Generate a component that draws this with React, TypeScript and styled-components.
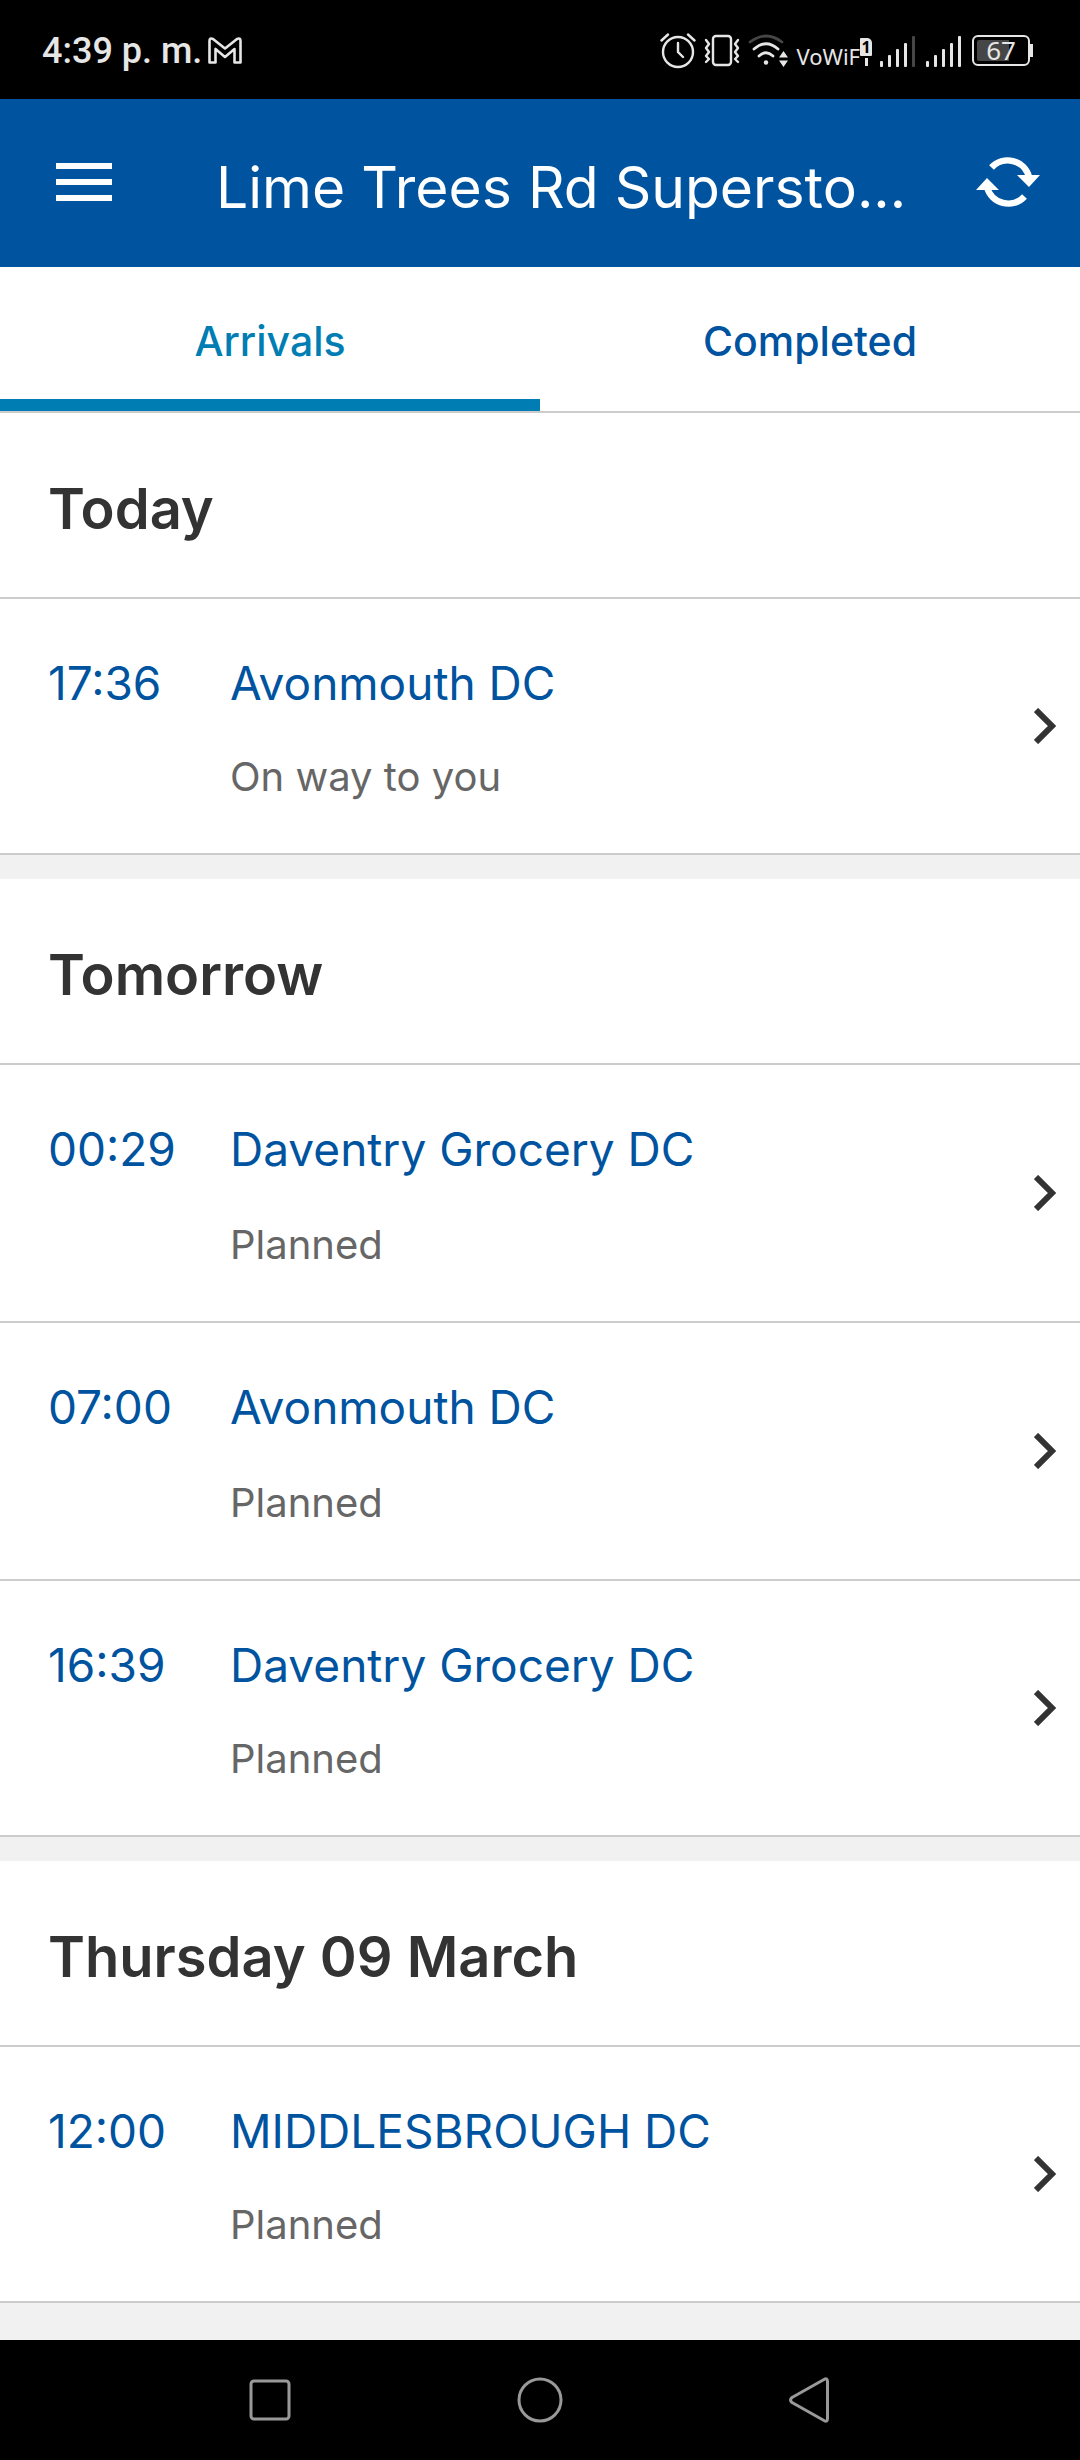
import React, { useState } from "react";
import styled, { createGlobalStyle } from "styled-components";

const GlobalStyle = createGlobalStyle`
  *, *::before, *::after { box-sizing: border-box; }
  html, body, #root { height: 100%; }
  body {
    margin: 0;
    background: #f1f1f1;
    font-family: Inter, "Liberation Sans", sans-serif;
  }
  button { font: inherit; color: inherit; border: 0; padding: 0; background: none; cursor: pointer; }
  svg { display: block; flex: none; }
  h1, h2, p { margin: 0; }
`;

const BRAND = "#00539f";
const ACCENT = "#007eb3";
const LINE = "#cccccc";

const Screen = styled.div`
  display: flex;
  flex-direction: column;
  min-height: 100%;
`;

const StatusBar = styled.div`
  display: flex;
  align-items: center;
  justify-content: space-between;
  height: 99px;
  padding: 2px 47px 0 42px;
  background: #000;
  color: #e6e6e6;
`;

const StatusGroup = styled.div<{ $gap: number }>`
  display: flex;
  align-items: center;
  gap: ${(p) => p.$gap}px;
`;

const Clock = styled.span`
  font: 500 36px/44px Roboto, sans-serif;
`;

const Network = styled.span`
  display: flex;
  align-items: flex-end;
  height: 30px;
  font: 400 22px/20px "Noto Sans", sans-serif;
`;

const SimMark = styled.span`
  display: flex;
  flex-direction: column;
  align-items: center;
  gap: 2px;
  height: 28px;
  &::after {
    content: "";
    width: 3px;
    flex: 1;
    background: #e6e6e6;
  }
`;

const SimCard = styled.span`
  width: 12px;
  height: 18px;
  border-radius: 1px 5px 1px 1px;
  background: #e6e6e6;
  color: #000;
  font: 700 16px/18px "Noto Sans", sans-serif;
  text-align: center;
`;

const Battery = styled.div`
  display: flex;
  align-items: center;
`;

const BatteryBody = styled.div`
  width: 58px;
  height: 31px;
  border: 2px solid #e6e6e6;
  border-radius: 6px;
  padding: 3px;
`;

const BatteryLevel = styled.div`
  height: 100%;
  border-radius: 2px;
  background: linear-gradient(to right, #464646 67%, transparent 67%);
  font: 400 26px/21px "Noto Sans", sans-serif;
  text-align: center;
`;

const BatteryTip = styled.div`
  width: 3px;
  height: 13px;
  background: #e6e6e6;
`;

const AppBar = styled.header`
  display: flex;
  align-items: center;
  height: 168px;
  padding: 0 40px 2px 56px;
  background: ${BRAND};
  color: #fff;
`;

const Title = styled.h1`
  flex: 1;
  min-width: 0;
  margin: 0 56px 0 104px;
  padding-top: 12px;
  font-size: 57px;
  line-height: 72px;
  font-weight: 400;
  white-space: nowrap;
  overflow: hidden;
  text-overflow: ellipsis;
`;

const Tabs = styled.nav`
  display: flex;
  height: 146px;
  background: #fff;
  border-bottom: 2px solid ${LINE};
`;

const Tab = styled.button<{ $active: boolean }>`
  flex: 1;
  padding-top: 16px;
  border-bottom: 12px solid ${(p) => (p.$active ? ACCENT : "transparent")};
  color: ${(p) => (p.$active ? ACCENT : BRAND)};
  font-size: 41px;
  line-height: 48px;
  font-weight: 500;
`;

const Days = styled.main`
  flex: 1;
  display: flex;
  flex-direction: column;
  gap: 24px;
`;

const Day = styled.section`
  background: #fff;
`;

const DayTitle = styled.h2`
  height: 186px;
  padding: 60px 48px;
  border-bottom: 2px solid ${LINE};
  color: #333;
  font-size: 56px;
  line-height: 72px;
  font-weight: 600;
`;

const Deliveries = styled.ul`
  list-style: none;
  margin: 0;
  padding: 0;
`;

const Delivery = styled.button<{ $gap: number }>`
  display: grid;
  grid-template-columns: 182px 1fr auto;
  align-items: center;
  row-gap: ${(p) => p.$gap}px;
  width: 100%;
  padding: 52px 24px 52px 48px;
  border-bottom: 2px solid ${LINE};
  text-align: left;
`;

const Headline = styled.span`
  color: ${BRAND};
  font-size: 46px;
  line-height: 64px;
`;

const Progress = styled.span`
  grid-column: 2;
  color: #666;
  font-size: 40px;
  line-height: 48px;
`;

const Arrow = styled.span`
  grid-column: 3;
  grid-row: 1 / 3;
`;

const SystemNav = styled.nav`
  display: flex;
  justify-content: space-around;
  height: 120px;
  padding: 0 135px;
  background: #000;
`;

const SystemButton = styled.button`
  flex: 1;
  display: grid;
  place-items: center;
`;

const AlarmIcon = () => (
  <svg width="36" height="36" viewBox="0 0 36 36" fill="none" stroke="#e6e6e6" strokeWidth="2.4" strokeLinecap="round">
    <circle cx="18" cy="19" r="15" />
    <path d="M18 10v9l5 5M1.500 7.500 8 1.500M34.500 7.500 28 1.500" />
  </svg>
);

const VibrateIcon = () => (
  <svg width="36" height="34" viewBox="0 0 36 34" fill="none" stroke="#e6e6e6" strokeWidth="2.4" strokeLinejoin="round" strokeLinecap="round">
    <rect x="9" y="2" width="18" height="29" rx="3" />
    <path d="M2 6l3 4-3 4 3 4-3 4 3 3-3 3M34 6l-3 4 3 4-3 4 3 4-3 3 3 3" />
  </svg>
);

const WifiIcon = () => (
  <svg width="40" height="34" viewBox="0 0 40 34" fill="none" stroke="#e6e6e6" strokeWidth="2.800" strokeLinecap="round">
    <path d="M2 8Q18-4 34 8" stroke="#464646" />
    <path d="M6 15Q18 4.500 30 15M11 22Q18 15.500 25 22" />
    <circle cx="18" cy="28.500" r="2.200" fill="#e6e6e6" stroke="none" />
    <path d="M31 23.500l4.500-6.500 4.500 6.500zM31 26.500l4.500 6.500 4.500-6.500z" fill="#e6e6e6" stroke="none" />
  </svg>
);

const SignalIcon = ({ level }: { level: number }) => (
  <svg width="38" height="32" viewBox="0 0 38 32">
    {[6, 12, 18, 24, 31].map((h, i) => (
      <rect key={h} x={i * 8} y={32 - h} width="3" height={h} rx="1" fill={i < level ? "#e6e6e6" : "#464646"} />
    ))}
  </svg>
);

const MailIcon = () => (
  <svg width="34" height="28" viewBox="0 0 34 28" fill="none" stroke="#e6e6e6" strokeWidth="2.600" strokeLinejoin="round">
    <path d="M1.500 25.500V4Q1.500 .500 5 2l12 9.500L29 2q3.500-1.500 3.500 2v21.500H26.500V12l-9.500 8-9.500-8v13.500z" />
  </svg>
);

const MenuIcon = () => (
  <svg width="56" height="38" viewBox="0 0 56 38" fill="#fff">
    <path d="M0 0h56v6H0zM0 16h56v6H0zM0 32h56v6H0z" />
  </svg>
);

const RefreshIcon = () => (
  <svg width="64" height="50" viewBox="0 0 64 50">
    <path d="M15.500 10.500A22 22 0 0 1 53 20M11 30A22 22 0 0 0 48.500 39.500" fill="none" stroke="#fff" strokeWidth="6.500" />
    <path d="M41 18h23L53 30zM0 33h23L11 21z" fill="#fff" />
  </svg>
);

const ChevronIcon = () => (
  <svg width="22" height="36" viewBox="0 0 22 36" fill="none" stroke="#333" strokeWidth="6">
    <path d="M2 2l16 16L2 34" />
  </svg>
);

const SystemIcon = ({ children }: { children: React.ReactNode }) => (
  <svg width="48" height="48" viewBox="0 0 48 48" fill="none" stroke="#999" strokeWidth="3" strokeLinejoin="round">
    {children}
  </svg>
);

const days = [
  { title: "Today", items: [{ time: "17:36", depot: "Avonmouth DC", status: "On way to you" }] },
  {
    title: "Tomorrow",
    items: [
      { time: "00:29", depot: "Daventry Grocery DC", status: "Planned" },
      { time: "07:00", depot: "Avonmouth DC", status: "Planned" },
      { time: "16:39", depot: "Daventry Grocery DC", status: "Planned" },
    ],
  },
  { title: "Thursday 09 March", items: [{ time: "12:00", depot: "MIDDLESBROUGH DC", status: "Planned" }] },
];

export default function App() {
  const [tab, setTab] = useState("Arrivals");
  return (
    <Screen>
      <GlobalStyle />
      <StatusBar>
        <StatusGroup $gap={6}>
          <Clock>4:39 p. m.</Clock>
          <MailIcon />
        </StatusGroup>
        <StatusGroup $gap={8}>
          <AlarmIcon />
          <VibrateIcon />
          <WifiIcon />
          <Network>
            VoWiF
            <SimMark>
              <SimCard>1</SimCard>
            </SimMark>
          </Network>
          <SignalIcon level={4} />
          <SignalIcon level={5} />
          <Battery>
            <BatteryBody>
              <BatteryLevel>67</BatteryLevel>
            </BatteryBody>
            <BatteryTip />
          </Battery>
        </StatusGroup>
      </StatusBar>
      <AppBar>
        <button aria-label="Menu"><MenuIcon /></button>
        <Title>Lime Trees Rd Supersto...</Title>
        <button aria-label="Refresh"><RefreshIcon /></button>
      </AppBar>
      <Tabs>
        {["Arrivals", "Completed"].map((name) => (
          <Tab key={name} $active={tab === name} onClick={() => setTab(name)}>{name}</Tab>
        ))}
      </Tabs>
      <Days>
        {days.map((day) => (
          <Day key={day.title}>
            <DayTitle>{day.title}</DayTitle>
            <Deliveries>
              {day.items.map((item, i) => (
                <li key={item.time}>
                  <Delivery $gap={i < day.items.length - 1 ? 40 : 38}>
                    <Headline>{item.time}</Headline>
                    <Headline>{item.depot}</Headline>
                    <Progress>{item.status}</Progress>
                    <Arrow><ChevronIcon /></Arrow>
                  </Delivery>
                </li>
              ))}
            </Deliveries>
          </Day>
        ))}
      </Days>
      <SystemNav>
        <SystemButton aria-label="Recent apps">
          <SystemIcon><rect x="5" y="5" width="38" height="38" rx="3" /></SystemIcon>
        </SystemButton>
        <SystemButton aria-label="Home">
          <SystemIcon><circle cx="24" cy="24" r="21" /></SystemIcon>
        </SystemButton>
        <SystemButton aria-label="Back">
          <SystemIcon><path d="M38 3.500Q41.500 1.500 41.500 5.500v37q0 4-3.500 2L6 26.500q-3-2.500 0-5z" /></SystemIcon>
        </SystemButton>
      </SystemNav>
    </Screen>
  );
}
